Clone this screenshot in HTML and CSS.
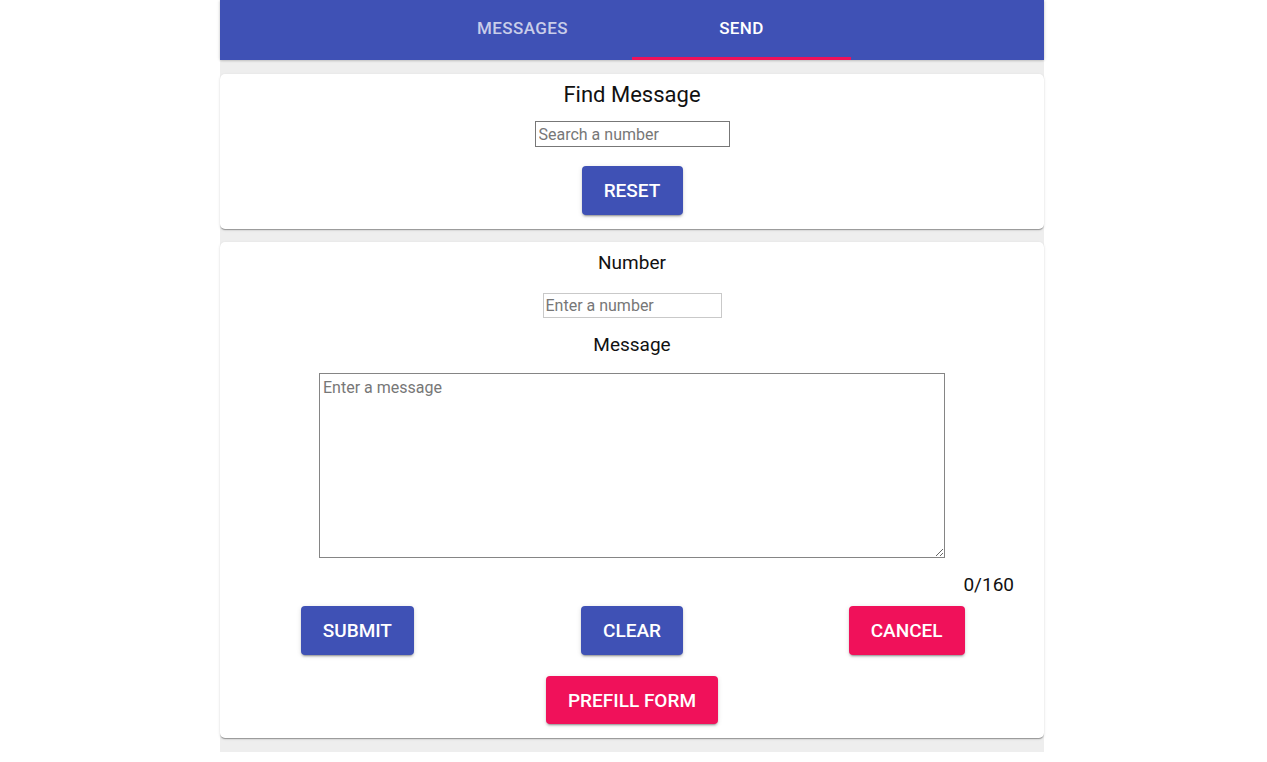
FILE: index.html
```html
<!DOCTYPE html>
<html>
<head>
<meta charset="utf-8">
<link rel="stylesheet" href="styles.css">
</head>
<body>
<div class="app">
  <header class="appbar">
    <nav class="tabs">
      <div class="tab">MESSAGES</div>
      <div class="tab active">SEND</div>
    </nav>
  </header>
  <main class="content">
    <section class="card find">
      <h2 class="find-title">Find Message</h2>
      <input class="search" type="text" placeholder="Search a number">
      <button class="btn blue reset">RESET</button>
    </section>
    <section class="card send">
      <label class="label">Number</label>
      <input class="number" type="text" placeholder="Enter a number">
      <label class="label msg-label">Message</label>
      <textarea class="message" placeholder="Enter a message"></textarea>
      <div class="counter">0/160</div>
      <div class="actions">
        <div class="cell"><button class="btn blue">SUBMIT</button></div>
        <div class="cell"><button class="btn blue">CLEAR</button></div>
        <div class="cell"><button class="btn pink">CANCEL</button></div>
      </div>
      <button class="btn pink prefill">PREFILL FORM</button>
    </section>
  </main>
</div>
</body>
</html>
```
FILE: styles.css
```css
html, body {
  margin: 0;
  padding: 0;
  background: #ffffff;
  font-family: Roboto, "Liberation Sans", Arial, sans-serif;
  color: #111;
}
.app {
  width: 824px;
  margin: 0 0 0 calc(50% - 413.5px);
  background: #eeeeee;
  padding-bottom: 14px;
  box-sizing: border-box;
}
.appbar {
  height: 60px;
  background: #3f51b5;
  box-shadow: 0 1px 2px 0 rgba(0,0,0,0.12), -1px 0 3px 0 rgba(0,0,0,0.08), 1px 0 3px 0 rgba(0,0,0,0.08);
  display: flex;
  justify-content: center;
  position: relative;
  z-index: 1;
}
.tabs {
  display: flex;
}
.tab {
  width: 219px;
  height: 60px;
  box-sizing: border-box;
  display: flex;
  align-items: center;
  justify-content: center;
  padding-bottom: 4px;
  font-size: 17px;
  font-weight: 500;
  color: rgba(255,255,255,0.72);
  letter-spacing: 0.4px;
}
.tab.active {
  color: #ffffff;
  border-bottom: 3px solid #f0115a;
  padding-bottom: 1px;
}
.content {
  padding-top: 14px;
  display: flex;
  flex-direction: column;
  gap: 13px;
}
.card {
  background: #fff;
  border-radius: 5px;
  box-shadow: 0 2px 1px -1px rgba(0,0,0,0.2), 0 1px 1px 0 rgba(0,0,0,0.14), 0 1px 3px 0 rgba(0,0,0,0.12);
  display: flex;
  flex-direction: column;
  align-items: center;
}
.find {
  padding: 9px 0 14px;
}
.find-title {
  margin: 0;
  font-size: 22px;
  font-weight: 400;
  line-height: 24px;
  color: #111;
}
.search {
  margin-top: 14px;
  width: 195px;
  height: 26px;
  box-sizing: border-box;
  border: 1px solid #777;
  border-radius: 0;
  padding: 0 3px;
  font-family: Roboto, "Liberation Sans", Arial, sans-serif;
  font-size: 16px;
  outline: none;
}
input::placeholder, textarea::placeholder {
  color: #777;
}
.btn {
  border: none;
  border-radius: 4px;
  height: 49px;
  padding: 0 22px;
  font-family: Roboto, "Liberation Sans", Arial, sans-serif;
  font-size: 19px;
  font-weight: 500;
  color: #fff;
  box-shadow: 0 3px 1px -2px rgba(0,0,0,0.2), 0 2px 2px 0 rgba(0,0,0,0.14), 0 1px 5px 0 rgba(0,0,0,0.12);
}
.btn.blue { background: #3f51b5; }
.btn.pink { background: #f0115a; }
.reset {
  margin-top: 19px;
  width: 101px;
}
.send {
  padding: 10px 0 14px;
}
.label {
  font-size: 19px;
  line-height: 22px;
  color: #111;
}
.number {
  margin-top: 19px;
  width: 179px;
  height: 25px;
  box-sizing: border-box;
  border: 1px solid #c9c9c9;
  padding: 0 2px;
  font-family: Roboto, "Liberation Sans", Arial, sans-serif;
  font-size: 16px;
  outline: none;
}
.msg-label {
  margin-top: 16px;
}
.message {
  margin-top: 17px;
  width: 626px;
  height: 185px;
  box-sizing: border-box;
  border: 1px solid #858585;
  padding: 4px 3px;
  font-family: Roboto, "Liberation Sans", Arial, sans-serif;
  font-size: 16px;
  outline: none;
  display: block;
}
.counter {
  align-self: stretch;
  text-align: right;
  padding-right: 30px;
  margin-top: 16px;
  font-size: 19px;
  line-height: 22px;
  color: #111;
}
.actions {
  margin-top: 10px;
  align-self: stretch;
  display: grid;
  grid-template-columns: 1fr 1fr 1fr;
}
.cell {
  display: flex;
  justify-content: center;
}
.prefill {
  margin-top: 21px;
  height: 48px;
}
```
